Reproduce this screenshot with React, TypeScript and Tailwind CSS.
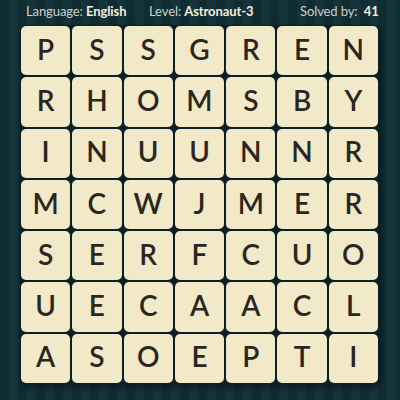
const rows = [
  "PSSGREN",
  "RHOMSBY",
  "INUUNNR",
  "MCWJMER",
  "SERFCUO",
  "UECAACL",
  "ASOEPTI",
];

export default function App() {
  return (
    <div className="w-[400px] h-[400px] overflow-hidden bg-[#112e35] bg-[repeating-linear-gradient(90deg,#102c33_0px,#102c33_9px,#14333a_9px,#14333a_18px)] font-['Lato','Noto_Sans',sans-serif]">
      <div className="h-[25px] flex items-center pl-[26px] text-[13px] text-[#cdd0c4] leading-none pb-[2px] tracking-[-0.1px]">
        <span className="w-[123px] shrink-0">
          Language: <span className="font-bold text-[#f2eedb]">English</span>
        </span>
        <span className="w-[151px] shrink-0">
          Level: <span className="font-bold text-[#f2eedb]">Astronaut-3</span>
        </span>
        <span>
          Solved by: <span className="font-bold text-[#f2eedb] ml-[3px]">41</span>
        </span>
      </div>
      <div className="ml-[20px] w-[359px] p-[1px] bg-[#0a1f26] rounded-[6px] shadow-[2px_3px_6px_rgba(0,0,0,0.45)]">
        <div className="grid grid-cols-7 gap-[2px]">
          {rows.flatMap((r, i) =>
            r.split("").map((ch, j) => (
              <div
                key={`${i}-${j}`}
                className="h-[49.3px] rounded-[5px] bg-[#f1e9c7] flex items-center justify-center pb-[4px] text-[28px] font-semibold text-[#2b2621] leading-none"
              >
                {ch}
              </div>
            ))
          )}
        </div>
      </div>
    </div>
  );
}
